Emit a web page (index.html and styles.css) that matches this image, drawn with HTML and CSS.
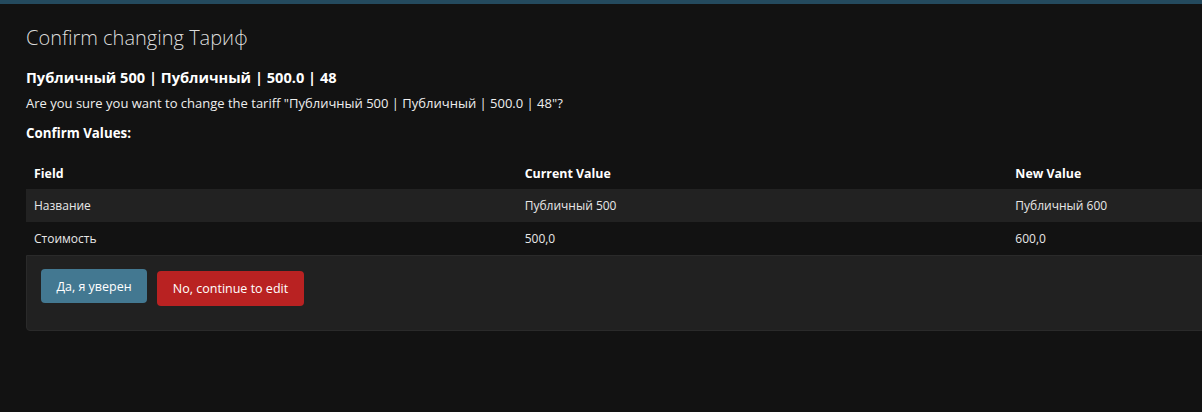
FILE: index.html
```html
<!DOCTYPE html>
<html>
<head>
<meta charset="utf-8">
<link rel="stylesheet" href="styles.css">
</head>
<body>
<div class="topbar"></div>
<main class="page">
  <h1 class="title">Confirm changing Тариф</h1>
  <h2 class="subject">Публичный 500 | Публичный | 500.0 | 48</h2>
  <p class="question">Are you sure you want to change the tariff "Публичный 500 | Публичный | 500.0 | 48"?</p>
  <h3 class="label">Confirm Values:</h3>
  <table class="values">
    <colgroup><col class="col"><col class="col"><col class="col"></colgroup>
    <thead>
      <tr><th>Field</th><th>Current Value</th><th>New Value</th></tr>
    </thead>
    <tbody>
      <tr class="odd"><td>Название</td><td>Публичный 500</td><td>Публичный 600</td></tr>
      <tr><td>Стоимость</td><td>500,0</td><td>600,0</td></tr>
    </tbody>
  </table>
  <div class="actions">
    <button class="btn btn-yes">Да, я уверен</button>
    <a class="btn btn-no">No, continue to edit</a>
  </div>
</main>
</body>
</html>
```
FILE: styles.css
```css
html, body {
  margin: 0;
  padding: 0;
  background: #121212;
  color: #e6e6e6;
  font-family: "Open Sans", "Noto Sans", sans-serif;
  overflow: hidden;
}
.topbar {
  height: 4px;
  background: #244a5e;
}
.page {
  padding: 0 0 0 26px;
  width: 1480px;
}
.title {
  margin: 22px 0 0;
  font-size: 20px;
  line-height: 24px;
  font-weight: 300;
  color: #dcdcdc;
}
.subject {
  margin: 17px 0 0;
  font-size: 14.6px;
  line-height: 20px;
  font-weight: 700;
  color: #fff;
}
.question {
  margin: 6px 0 0;
  font-size: 13px;
  line-height: 20px;
  color: #eee;
}
.label {
  margin: 10px 0 0;
  font-size: 13.3px;
  line-height: 20px;
  font-weight: 700;
  color: #fff;
}
.values {
  margin-top: 14px;
  border-collapse: collapse;
  border-spacing: 0;
  width: 1472px;
  table-layout: fixed;
  font-size: 12px;
}
.values .col {
  width: 490px;
}
.values th, .values td {
  text-align: left;
  padding: 0 8px;
}
.values th {
  height: 32px;
  font-weight: 700;
  font-size: 12.4px;
  color: #fff;
}
.values td {
  height: 33px;
  color: #e8e8e8;
}
.values tr.odd {
  background: #222222;
}
.actions {
  width: 1470px;
  height: 76px;
  box-sizing: border-box;
  padding: 13px 14px;
  background: #212121;
  border: 1px solid #2a2a2a;
  border-radius: 0 0 4px 4px;
  display: flex;
  align-items: flex-start;
  gap: 10px;
}
.btn {
  box-sizing: border-box;
  height: 34px;
  padding: 0;
  border: none;
  border-radius: 4px;
  font-family: inherit;
  font-size: 12.5px;
  color: #fff;
  display: flex;
  align-items: center;
  justify-content: center;
}
.btn-yes {
  background: #437891;
  width: 106px;
}
.btn-no {
  background: #b92222;
  width: 147px;
  height: 35px;
  margin-top: 2px;
}
```
